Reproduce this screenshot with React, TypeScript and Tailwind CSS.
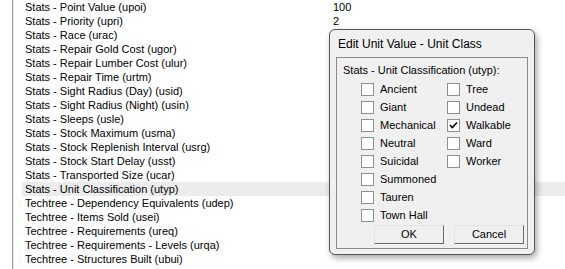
import React from "react";

const rows: { name: string; value?: string; selected?: boolean }[] = [
  { name: "Stats - Point Value (upoi)", value: "100" },
  { name: "Stats - Priority (upri)", value: "2" },
  { name: "Stats - Race (urac)" },
  { name: "Stats - Repair Gold Cost (ugor)" },
  { name: "Stats - Repair Lumber Cost (ulur)" },
  { name: "Stats - Repair Time (urtm)" },
  { name: "Stats - Sight Radius (Day) (usid)" },
  { name: "Stats - Sight Radius (Night) (usin)" },
  { name: "Stats - Sleeps (usle)" },
  { name: "Stats - Stock Maximum (usma)" },
  { name: "Stats - Stock Replenish Interval (usrg)" },
  { name: "Stats - Stock Start Delay (usst)" },
  { name: "Stats - Transported Size (ucar)" },
  { name: "Stats - Unit Classification (utyp)", selected: true },
  { name: "Techtree - Dependency Equivalents (udep)" },
  { name: "Techtree - Items Sold (usei)" },
  { name: "Techtree - Requirements (ureq)" },
  { name: "Techtree - Requirements - Levels (urqa)" },
  { name: "Techtree - Structures Built (ubui)" },
];

const col1 = ["Ancient", "Giant", "Mechanical", "Neutral", "Suicidal", "Summoned", "Tauren", "Town Hall"];
const col2: { label: string; checked?: boolean }[] = [
  { label: "Tree" },
  { label: "Undead" },
  { label: "Walkable", checked: true },
  { label: "Ward" },
  { label: "Worker" },
];

function Check({ label, checked }: { label: string; checked?: boolean }) {
  return (
    <div className="flex h-[18px] items-center">
      <div className="relative h-[13px] w-[13px] shrink-0 border border-[#8e8f8f] bg-white">
        {checked && (
          <svg className="absolute left-[1px] top-[1px]" width="9" height="9" viewBox="0 0 9 9">
            <path d="M1 4 L3.3 6.5 L8 1.5" fill="none" stroke="#000" strokeWidth="1.6" />
          </svg>
        )}
      </div>
      <span className="ml-[6px] leading-none">{label}</span>
    </div>
  );
}

export default function App() {
  return (
    <div
      className="relative h-[269px] w-[565px] overflow-hidden bg-white text-[11px] text-black"
      style={{ fontFamily: '"Liberation Sans", Arial, sans-serif' }}
    >
      <div className="ml-[12px] flex h-full">
        <div className="w-px bg-[#a0a0a0]" />
        <div className="w-px bg-[#e3e3e3]" />
        <div className="ml-[8px] flex flex-1 flex-col">
          <div className="-mt-[14px] flex h-[14px] items-center pl-[3px] leading-[14px] text-[#ff00ff]">
            <span className="relative top-[1px] w-[308px] shrink-0 pl-[128px]">(upgr) (ypqp)</span>
          </div>
          {rows.map((r) => (
            <div
              key={r.name}
              className={
                "flex h-[14px] items-center pl-[3px] leading-[14px] " + (r.selected ? "bg-[#ececec]" : "")
              }
            >
              <span className="w-[308px] shrink-0 whitespace-nowrap">{r.name}</span>
              <span>{r.value}</span>
            </div>
          ))}
        </div>
      </div>

      {/* Dialog */}
      <div className="absolute left-[329px] top-[29px] flex h-[226px] w-[206px] flex-col rounded-[6px] border border-[#555555] bg-[#f0f0f0] px-[6px] pb-[5px] shadow-[2px_3px_6px_rgba(0,0,0,0.35)]">
        <div
          className="flex h-[27px] shrink-0 items-center pl-[2px] text-[12px]"
          style={{ fontFamily: '"Liberation Sans", Arial, sans-serif' }}
        >
          Edit Unit Value - Unit Class
        </div>
        <div className="flex flex-1 flex-col border border-[#8a8a8a] bg-[#f0f0f0]">
          <div className="ml-[6px] mt-[6px] h-[13px] leading-[13px]">Stats - Unit Classification (utyp):</div>
          <div className="ml-[24px] mt-[3px] flex">
            <div className="flex w-[86px] flex-col">
              {col1.map((c) => (
                <Check key={c} label={c} />
              ))}
            </div>
            <div className="flex flex-col">
              {col2.map((c) => (
                <Check key={c.label} label={c.label} checked={c.checked} />
              ))}
            </div>
          </div>
          <div className="ml-[37px] mt-[1px] flex gap-[10px]">
            <button className="h-[19px] w-[70px] border border-b-[#696969] border-l-[#e3e3e3] border-r-[#696969] border-t-[#e3e3e3] bg-[#efefef] leading-none">
              OK
            </button>
            <button className="h-[19px] w-[70px] border border-b-[#696969] border-l-[#e3e3e3] border-r-[#696969] border-t-[#e3e3e3] bg-[#efefef] leading-none">
              Cancel
            </button>
          </div>
        </div>
      </div>
    </div>
  );
}
